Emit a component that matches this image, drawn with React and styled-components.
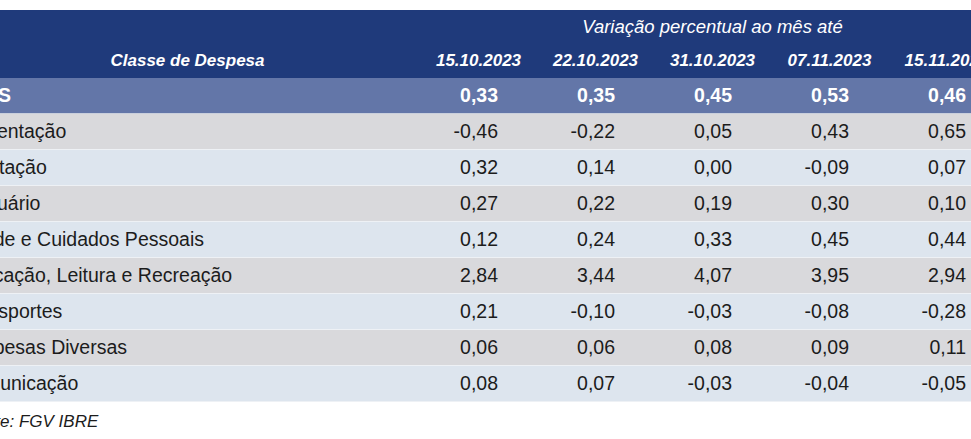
import React from "react";
import styled, { createGlobalStyle } from "styled-components";

const Global = createGlobalStyle`
  html, body { margin: 0; padding: 0; background: #ffffff; overflow: hidden; }
  body { font-family: "Liberation Sans", Arial, sans-serif; }
`;

const Page = styled.div`
  padding-top: 10px;
  width: 971px;
  overflow: hidden;
`;

const Table = styled.div`
  margin-left: -45px;
  display: grid;
  grid-template-columns: 465px repeat(5, 117px);
  width: max-content;
`;

const HeadCell = styled.div`
  background: #1f3a7b;
  color: #ffffff;
  font-weight: ${(p) => (p.$light ? 400 : 700)};
  font-style: italic;
  font-size: ${(p) => (p.$light ? "18.5px" : "17px")};
  height: 34px;
  display: flex;
  align-items: center;
  justify-content: center;
  white-space: nowrap;
  grid-column: ${(p) => p.$span || "auto"};
  grid-row: ${(p) => p.$row || "auto"};
  ${(p) => p.$bottom && "align-items: flex-end; padding-bottom: 7px; height: auto; box-sizing: border-box;"}
`;

const Row = styled.div`
  display: contents;
`;

const Cell = styled.div`
  background: ${(p) => p.$bg};
  color: ${(p) => (p.$total ? "#ffffff" : "#1c1c1c")};
  font-weight: ${(p) => (p.$total ? 700 : 400)};
  font-size: 19.5px;
  height: 35px;
  border-bottom: 1px solid ${(p) => (p.$total ? "#c9cfdc" : "#eef1f5")};
  display: flex;
  align-items: center;
  justify-content: ${(p) => (p.$label ? "flex-start" : "flex-end")};
  padding: ${(p) => (p.$label ? "0 0 0 4px" : "0 39px 0 0")};
  white-space: nowrap;
`;

const Footer = styled.div`
  margin-left: -34px;
  padding-top: 10px;
  font-style: italic;
  font-size: 17px;
  line-height: 19px;
  color: #1c1c1c;
`;

const dates = ["15.10.2023", "22.10.2023", "31.10.2023", "07.11.2023", "15.11.2023"];

const rows = [
  { label: "IPC-S", values: ["0,33", "0,35", "0,45", "0,53", "0,46"], total: true },
  { label: "Alimentação", values: ["-0,46", "-0,22", "0,05", "0,43", "0,65"] },
  { label: "Habitação", values: ["0,32", "0,14", "0,00", "-0,09", "0,07"] },
  { label: "Vestuário", values: ["0,27", "0,22", "0,19", "0,30", "0,10"] },
  { label: "Saúde e Cuidados Pessoais", values: ["0,12", "0,24", "0,33", "0,45", "0,44"] },
  { label: "Educação, Leitura e Recreação", values: ["2,84", "3,44", "4,07", "3,95", "2,94"] },
  { label: "Transportes", values: ["0,21", "-0,10", "-0,03", "-0,08", "-0,28"] },
  { label: "Despesas Diversas", values: ["0,06", "0,06", "0,08", "0,09", "0,11"] },
  { label: "Comunicação", values: ["0,08", "0,07", "-0,03", "-0,04", "-0,05"] },
];

function bgFor(row, i) {
  if (row.total) return "#6376a8";
  return i % 2 === 1 ? "#d9d9dc" : "#dde5ee";
}

export default function App() {
  return (
    <>
      <Global />
      <Page>
        <Table>
          <HeadCell $row="1 / span 2" $bottom>Classe de Despesa</HeadCell>
          <HeadCell $span="2 / span 5" $light>Variação percentual ao mês até</HeadCell>
          {dates.map((d) => (
            <HeadCell key={d}>{d}</HeadCell>
          ))}
          {rows.map((r, i) => (
            <Row key={r.label}>
              <Cell $label $total={r.total} $bg={bgFor(r, i)}>{r.label}</Cell>
              {r.values.map((v, j) => (
                <Cell key={j} $total={r.total} $bg={bgFor(r, i)}>{v}</Cell>
              ))}
            </Row>
          ))}
        </Table>
        <Footer>Fonte: FGV IBRE</Footer>
      </Page>
    </>
  );
}
